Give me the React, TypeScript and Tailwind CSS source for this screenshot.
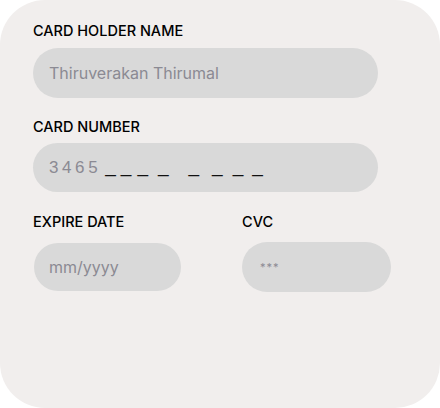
export default function App() {
  const lead = ["ml-0", "ml-[5px]", "ml-[6px]", "ml-[10px]"];
  const tail = ["ml-[20px]", "ml-[13px]", "ml-[10px]", "ml-[9px]"];
  return (
    <div className="w-[440px] h-[408px] bg-white font-['Inter',sans-serif]">
      <div className="w-[440px] h-[408px] rounded-[45px] bg-[#f1eeed] pt-[22px] pl-[33px]">
        {/* Card holder */}
        <label className="block text-[14.5px] font-medium leading-[18px] text-black">CARD HOLDER NAME</label>
        <div className="mt-[8px] w-[345px] h-[50px] rounded-full bg-[#d9d9d9] flex items-center pl-[16px]">
          <span className="text-[16px] text-[#8b8a93]">Thiruverakan Thirumal</span>
        </div>

        {/* Card number */}
        <label className="block mt-[20px] text-[14.5px] font-medium leading-[18px] text-black">CARD NUMBER</label>
        <div className="mt-[7px] w-[345px] h-[49px] rounded-full bg-[#d9d9d9] flex items-center pl-[16px] font-['Liberation_Sans',sans-serif] text-[#8b8a93]">
          <span className="text-[17px] tracking-[3.6px] leading-none">3465</span>
          <span className="ml-[4px] flex text-[19px] leading-none -mt-[4px] text-[#111]">
            {lead.map((m, i) => (
              <span key={"a" + i} className={m}>_</span>
            ))}
            {tail.map((m, i) => (
              <span key={"b" + i} className={m}>_</span>
            ))}
          </span>
        </div>

        {/* Expire + CVC */}
        <div className="mt-[21px] flex">
          <div className="w-[209px]">
            <label className="block text-[14.5px] font-medium leading-[18px] text-black">EXPIRE DATE</label>
            <div className="mt-[12px] ml-[1px] w-[147px] h-[48px] rounded-full bg-[#d9d9d9] flex items-center pl-[15px]">
              <span className="text-[16px] text-[#8b8a93]">mm/yyyy</span>
            </div>
          </div>
          <div>
            <label className="block text-[14.5px] font-medium leading-[18px] text-black">CVC</label>
            <div className="mt-[11px] w-[149px] h-[50px] rounded-full bg-[#d9d9d9] flex items-center pl-[18px]">
              <span className="text-[11px] text-[#8b8a93] tracking-[1px]">***</span>
            </div>
          </div>
        </div>
      </div>
    </div>
  );
}
